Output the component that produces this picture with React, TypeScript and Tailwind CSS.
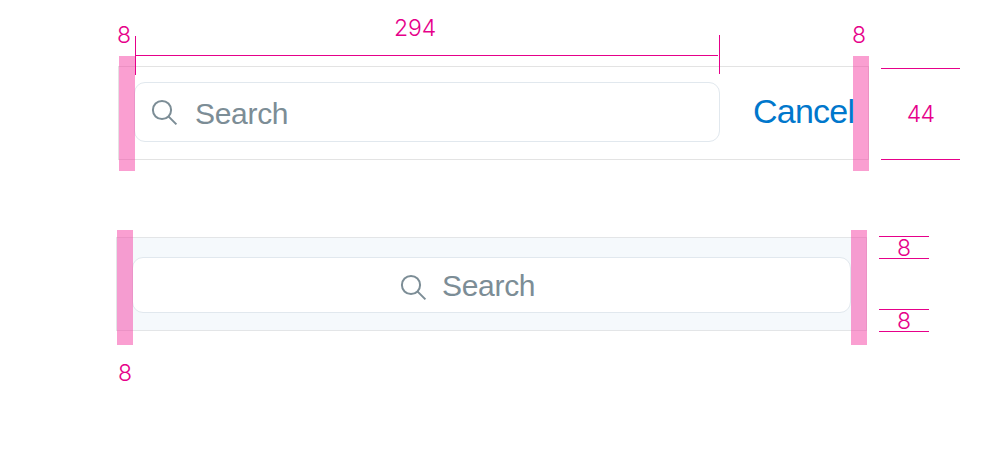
import React from "react";

function SearchIcon() {
  return (
    <svg className="block shrink-0" width="27" height="27" viewBox="0 0 27 27" fill="none" stroke="#7c8d96" strokeWidth="2">
      <circle cx="11" cy="11" r="9.1" />
      <path d="M17.4 17.4L25.4 25.4" />
    </svg>
  );
}

function Placeholder() {
  return (
    <span className="text-[30px] leading-[34px] tracking-[-0.3px] whitespace-nowrap text-[#7c8d96]">
      Search
    </span>
  );
}

/* Translucent strips laid over both side margins of a bar. */
function Margins({ className }: { className: string }) {
  return (
    <div className={`absolute left-0 -right-px flex h-[115px] justify-between ${className}`}>
      <div className="w-4 bg-[#f53fa3]/50" />
      <div className="w-4 bg-[#f53fa3]/50" />
    </div>
  );
}

export default function App() {
  return (
    <main className="flex h-[450px] w-[982px] flex-col overflow-hidden bg-white font-['Liberation_Sans',Arial,sans-serif]">
      <header className="relative z-10 flex h-[66px] items-start pl-[117px] font-['Inter',sans-serif] text-[23px] leading-6 font-light text-[#e6008a]">
        <span className="w-[18px] pt-[23px]">8</span>
        <div className="flex w-[585px] items-start">
          <div className="mt-9 h-[39px] w-px bg-[#e6008a]" />
          <div className="mr-px flex h-14 flex-1 flex-col items-center border-b border-[#e6008a] pt-4 pr-6">
            <span className="tracking-[-0.1px]">294</span>
          </div>
          <div className="mt-[35px] h-[39px] w-px bg-[#e6008a]" />
        </div>
        <span className="pt-[23px] pl-[132px]">8</span>
      </header>

      <section className="flex gap-3 pl-[118px]">
        <div className="relative flex h-[94px] w-[751px] items-start border border-[#e3e3e3] pt-[15px] pl-[15px]">
          <div className="flex h-[60px] w-[586px] items-center gap-[17px] rounded-[11px] border border-[#e1e8ee] bg-white pl-4">
            <SearchIcon />
            <div className="pt-[3px]"><Placeholder /></div>
          </div>
          <span className="pt-[9px] pl-[33px] text-[34px] leading-[40px] tracking-[-0.75px] whitespace-nowrap text-[#0077cc]">
            Cancel
          </span>
          <Margins className="-top-[11px]" />
        </div>
        <div className="mt-0.5 flex h-[92px] w-[79px] items-center justify-center border-y border-[#e6008a] font-['Inter',sans-serif] text-[23px] font-light tracking-[-0.6px] text-[#e6008a]">
          44
        </div>
      </section>

      <section className="flex gap-3 pt-[77px] pl-[116px]">
        <div className="relative h-[94px] w-[751px] border border-[#e3e5e7] bg-[#f5f9fc] pt-[19px] pl-[15px]">
          <div className="flex h-[56px] w-[719px] items-center gap-[15px] rounded-[11px] border border-[#e1e8ee] bg-white pl-[267px]">
            <div className="pt-1"><SearchIcon /></div>
            <div className="pt-[2px]"><Placeholder /></div>
          </div>
          <Margins className="-top-2" />
        </div>
        <div className="-mt-px flex h-24 w-[50px] flex-col justify-between font-['Inter',sans-serif] text-[23px] leading-6 font-light text-[#e6008a]">
          <div className="flex h-[23px] items-center justify-center border-y border-[#e6008a]">8</div>
          <div className="flex h-[23px] items-center justify-center border-y border-[#e6008a]">8</div>
        </div>
      </section>

      <footer className="pt-[29px] pl-[118px] font-['Inter',sans-serif] text-[23px] leading-6 font-light text-[#e6008a]">
        8
      </footer>
    </main>
  );
}
